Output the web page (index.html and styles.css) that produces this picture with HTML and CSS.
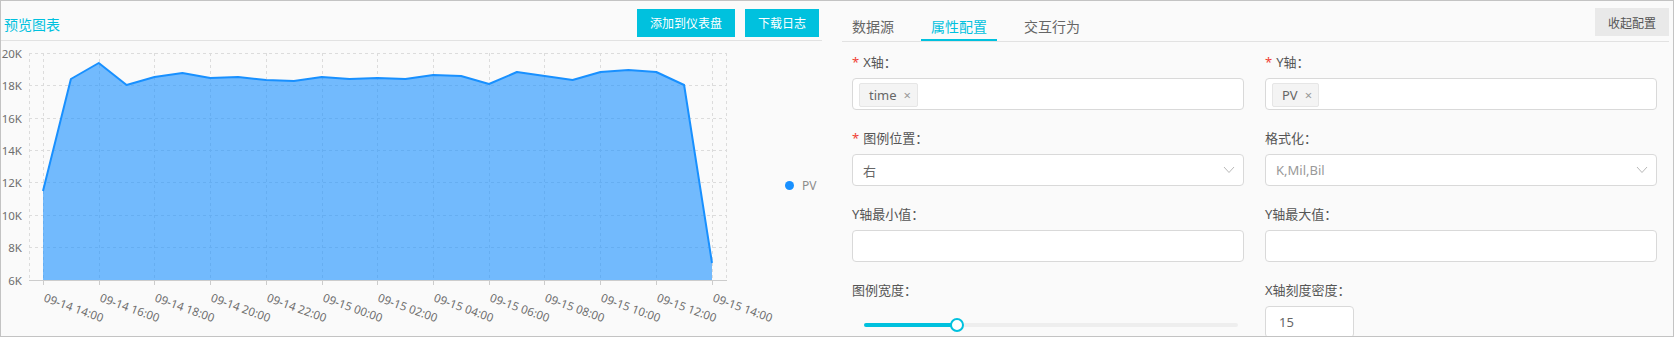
FILE: index.html
```html
<!DOCTYPE html>
<html lang="zh-CN">
<head>
<meta charset="utf-8">
<title>预览图表</title>
<link rel="stylesheet" href="styles.css">
</head>
<body>
<div class="frame">
  <section class="preview">
    <header class="preview-head">
      <h2 class="preview-title">预览图表</h2>
      <div class="head-actions">
        <button class="btn-primary">添加到仪表盘</button>
        <button class="btn-primary">下载日志</button>
      </div>
    </header>
    <svg class="chart" width="821" height="295" viewBox="1 41 821 295" xmlns="http://www.w3.org/2000/svg">
      <g class="grid" stroke="#dcdcdc" stroke-width="1" stroke-dasharray="3 3" fill="none">
        <line x1="29" y1="53.5" x2="726" y2="53.5"/>
        <line x1="29" y1="85.5" x2="726" y2="85.5"/>
        <line x1="29" y1="118.5" x2="726" y2="118.5"/>
        <line x1="29" y1="150.5" x2="726" y2="150.5"/>
        <line x1="29" y1="182.5" x2="726" y2="182.5"/>
        <line x1="29" y1="215.5" x2="726" y2="215.5"/>
        <line x1="29" y1="247.5" x2="726" y2="247.5"/>
        <line x1="29.5" y1="53" x2="29.5" y2="280"/>
        <line x1="43.5" y1="53" x2="43.5" y2="280"/>
        <line x1="99.5" y1="53" x2="99.5" y2="280"/>
        <line x1="154.5" y1="53" x2="154.5" y2="280"/>
        <line x1="210.5" y1="53" x2="210.5" y2="280"/>
        <line x1="266.5" y1="53" x2="266.5" y2="280"/>
        <line x1="322.5" y1="53" x2="322.5" y2="280"/>
        <line x1="377.5" y1="53" x2="377.5" y2="280"/>
        <line x1="433.5" y1="53" x2="433.5" y2="280"/>
        <line x1="489.5" y1="53" x2="489.5" y2="280"/>
        <line x1="544.5" y1="53" x2="544.5" y2="280"/>
        <line x1="600.5" y1="53" x2="600.5" y2="280"/>
        <line x1="656.5" y1="53" x2="656.5" y2="280"/>
        <line x1="712.5" y1="53" x2="712.5" y2="280"/>
        <line x1="726.5" y1="53" x2="726.5" y2="280"/>
      </g>
      <path d="M43 191 L70.9 79 L98.75 63 L126.6 85 L154.5 77 L182.4 73 L210.25 78 L238.1 77 L266 80 L293.9 81 L321.75 77 L349.6 79 L377.5 78 L405.4 79 L433.25 75 L461.1 76 L489 84 L516.9 72 L544.75 76 L572.6 80 L600.5 72 L628.4 70 L656.25 72 L684.1 85 L712 263 L712 280 L43 280 Z" fill="#1890ff" fill-opacity="0.6"/>
      <path d="M43 191 L70.9 79 L98.75 63 L126.6 85 L154.5 77 L182.4 73 L210.25 78 L238.1 77 L266 80 L293.9 81 L321.75 77 L349.6 79 L377.5 78 L405.4 79 L433.25 75 L461.1 76 L489 84 L516.9 72 L544.75 76 L572.6 80 L600.5 72 L628.4 70 L656.25 72 L684.1 85 L712 263" fill="none" stroke="#1890ff" stroke-width="2" stroke-linejoin="round"/>
      <g stroke="#cccccc" stroke-width="1">
        <line x1="29" y1="280.5" x2="727" y2="280.5"/>
        <line x1="43.5" y1="280" x2="43.5" y2="285"/>
        <line x1="99.5" y1="280" x2="99.5" y2="285"/>
        <line x1="154.5" y1="280" x2="154.5" y2="285"/>
        <line x1="210.5" y1="280" x2="210.5" y2="285"/>
        <line x1="266.5" y1="280" x2="266.5" y2="285"/>
        <line x1="322.5" y1="280" x2="322.5" y2="285"/>
        <line x1="377.5" y1="280" x2="377.5" y2="285"/>
        <line x1="433.5" y1="280" x2="433.5" y2="285"/>
        <line x1="489.5" y1="280" x2="489.5" y2="285"/>
        <line x1="544.5" y1="280" x2="544.5" y2="285"/>
        <line x1="600.5" y1="280" x2="600.5" y2="285"/>
        <line x1="656.5" y1="280" x2="656.5" y2="285"/>
        <line x1="712.5" y1="280" x2="712.5" y2="285"/>
      </g>
      <g class="axis-text" text-anchor="end">
        <text x="22" y="57.5">20K</text>
        <text x="22" y="90">18K</text>
        <text x="22" y="122.5">16K</text>
        <text x="22" y="155">14K</text>
        <text x="22" y="187">12K</text>
        <text x="22" y="219.5">10K</text>
        <text x="22" y="252">8K</text>
        <text x="22" y="284.5">6K</text>
      </g>
      <g class="axis-text">
        <text x="43" y="301" transform="rotate(20 43 301)">09-14 14:00</text>
        <text x="99" y="301" transform="rotate(20 99 301)">09-14 16:00</text>
        <text x="154" y="301" transform="rotate(20 154 301)">09-14 18:00</text>
        <text x="210" y="301" transform="rotate(20 210 301)">09-14 20:00</text>
        <text x="266" y="301" transform="rotate(20 266 301)">09-14 22:00</text>
        <text x="322" y="301" transform="rotate(20 322 301)">09-15 00:00</text>
        <text x="377" y="301" transform="rotate(20 377 301)">09-15 02:00</text>
        <text x="433" y="301" transform="rotate(20 433 301)">09-15 04:00</text>
        <text x="489" y="301" transform="rotate(20 489 301)">09-15 06:00</text>
        <text x="544" y="301" transform="rotate(20 544 301)">09-15 08:00</text>
        <text x="600" y="301" transform="rotate(20 600 301)">09-15 10:00</text>
        <text x="656" y="301" transform="rotate(20 656 301)">09-15 12:00</text>
        <text x="712" y="301" transform="rotate(20 712 301)">09-15 14:00</text>
      </g>
      <circle cx="789.5" cy="185.5" r="4.5" fill="#1890ff"/>
      <text class="legend-text" x="802" y="189.5">PV</text>
    </svg>
  </section>

  <section class="config">
    <nav class="tabs">
      <span class="tab">数据源</span>
      <span class="tab tab-active">属性配置</span>
      <span class="tab">交互行为</span>
      <button class="btn-collapse">收起配置</button>
    </nav>
    <div class="form">
      <div class="field">
        <label class="field-label"><span class="req">*</span>X轴：</label>
        <div class="control tags-box"><span class="tag">time<span class="tag-x">×</span></span></div>
      </div>
      <div class="field">
        <label class="field-label"><span class="req">*</span>Y轴：</label>
        <div class="control tags-box"><span class="tag">PV<span class="tag-x">×</span></span></div>
      </div>
      <div class="field">
        <label class="field-label"><span class="req">*</span>图例位置：</label>
        <div class="control select"><span class="select-value">右</span>
          <svg class="chev" width="12" height="8" viewBox="0 0 12 8"><polyline points="1,1 6,6.5 11,1" fill="none" stroke="#b8b8b8" stroke-width="1"/></svg>
        </div>
      </div>
      <div class="field">
        <label class="field-label">格式化：</label>
        <div class="control select"><span class="select-value muted">K,Mil,Bil</span>
          <svg class="chev" width="12" height="8" viewBox="0 0 12 8"><polyline points="1,1 6,6.5 11,1" fill="none" stroke="#b8b8b8" stroke-width="1"/></svg>
        </div>
      </div>
      <div class="field">
        <label class="field-label">Y轴最小值：</label>
        <div class="control"></div>
      </div>
      <div class="field">
        <label class="field-label">Y轴最大值：</label>
        <div class="control"></div>
      </div>
      <div class="field">
        <label class="field-label">图例宽度：</label>
        <div class="slider">
          <div class="slider-track"><div class="slider-fill" style="width:93px"></div><span class="slider-handle" style="left:93px"></span></div>
        </div>
      </div>
      <div class="field">
        <label class="field-label">X轴刻度密度：</label>
        <div class="control number">15</div>
      </div>
    </div>
  </section>
</div>
</body>
</html>
```

FILE: styles.css
```css
* { box-sizing: border-box; }
html, body { margin: 0; padding: 0; background: #fafafa; }
body {
  font-family: "Noto Sans", "Noto Sans CJK SC", sans-serif;
  color: #555;
}
.frame {
  width: 1674px;
  height: 337px;
  border: 1px solid #c3c3c3;
  background: #fafafa;
  display: flex;
  overflow: hidden;
}
.preview {
  flex: none;
  width: 821px;
  display: flex;
  flex-direction: column;
}
.preview-head {
  height: 40px;
  border-bottom: 1px solid #e2e2e2;
  display: flex;
  align-items: flex-start;
  padding: 0 3px;
}
.preview-title {
  margin: 13px 0 0;
  font-size: 14px;
  line-height: 20px;
  font-weight: normal;
  color: #00c1de;
  font-family: "Noto Sans CJK SC", sans-serif;
}
.head-actions {
  margin-left: auto;
  margin-top: 8px;
  display: flex;
  gap: 10px;
}
.btn-primary {
  height: 28px;
  padding: 0 13px;
  border: none;
  background: #00c1de;
  color: #fff;
  font-family: "Noto Sans CJK SC", sans-serif;
  font-size: 12px;
  line-height: 28px;
  cursor: pointer;
}
.chart { display: block; }
.axis-text text, .axis-text {
  font-family: "Noto Sans", sans-serif;
  font-size: 11.5px;
  fill: #6e6e6e;
}
.legend-text {
  font-family: "Noto Sans", sans-serif;
  font-size: 12px;
  fill: #8c8c8c;
}

.config {
  flex: 1;
  margin-left: 20px;
  padding-right: 4px;
  display: flex;
  flex-direction: column;
}
.tabs {
  display: flex;
  align-items: flex-start;
  border-bottom: 1px solid #e2e2e2;
  height: 41px;
}
.tab {
  padding: 15px 10px 3px;
  line-height: 20px;
  font-size: 14px;
  color: #666;
  border-bottom: 2px solid transparent;
  margin-right: 17px;
  font-family: "Noto Sans CJK SC", sans-serif;
}
.tab-active {
  color: #00c1de;
  border-bottom-color: #00c1de;
}
.btn-collapse {
  margin-left: auto;
  margin-top: 7px;
  height: 28px;
  width: 74px;
  border: none;
  background: #e9e9e9;
  color: #555;
  font-family: "Noto Sans CJK SC", sans-serif;
  font-size: 12px;
  padding: 0;
}
.form {
  padding: 10px 11px 0 10px;
  display: grid;
  grid-template-columns: 392px 392px;
  column-gap: 21px;
}
.field { margin-bottom: 18px; }
.field-label {
  display: block;
  font-size: 13px;
  line-height: 20px;
  height: 20px;
  margin-bottom: 6px;
  color: #555;
}
.req {
  color: #f04134;
  margin-right: 4px;
  font-family: "Noto Sans", sans-serif;
}
.control {
  height: 32px;
  border: 1px solid #d9d9d9;
  border-radius: 4px;
  background: #fff;
  font-size: 13px;
}
.tags-box {
  padding: 4px 6px;
}
.tag {
  display: inline-flex;
  align-items: center;
  height: 24px;
  padding: 0 6px 0 9px;
  border: 1px solid #e6e6e6;
  border-radius: 2px;
  background: #f4f4f4;
  color: #666;
  font-size: 13px;
  line-height: 22px;
}
.tag-x {
  margin-left: 7px;
  color: #999;
  font-size: 13px;
}
.select {
  display: flex;
  align-items: center;
  padding: 0 8px 0 10px;
}
.select-value { color: #666; font-size: 13px; }
.select-value.muted { color: #999; }
.chev { margin-left: auto; }
.slider {
  height: 32px;
  padding: 17px 6px 0 12px;
}
.slider-track {
  position: relative;
  height: 4px;
  border-radius: 2px;
  background: #eeeeee;
}
.slider-fill {
  height: 4px;
  border-radius: 2px;
  background: #00c1de;
}
.slider-handle {
  position: absolute;
  top: -5px;
  width: 14px;
  height: 14px;
  margin-left: -7px;
  border: 2px solid #00c1de;
  border-radius: 50%;
  background: #fff;
}
.number {
  width: 89px;
  padding-left: 13px;
  line-height: 30px;
  color: #666;
}
```
